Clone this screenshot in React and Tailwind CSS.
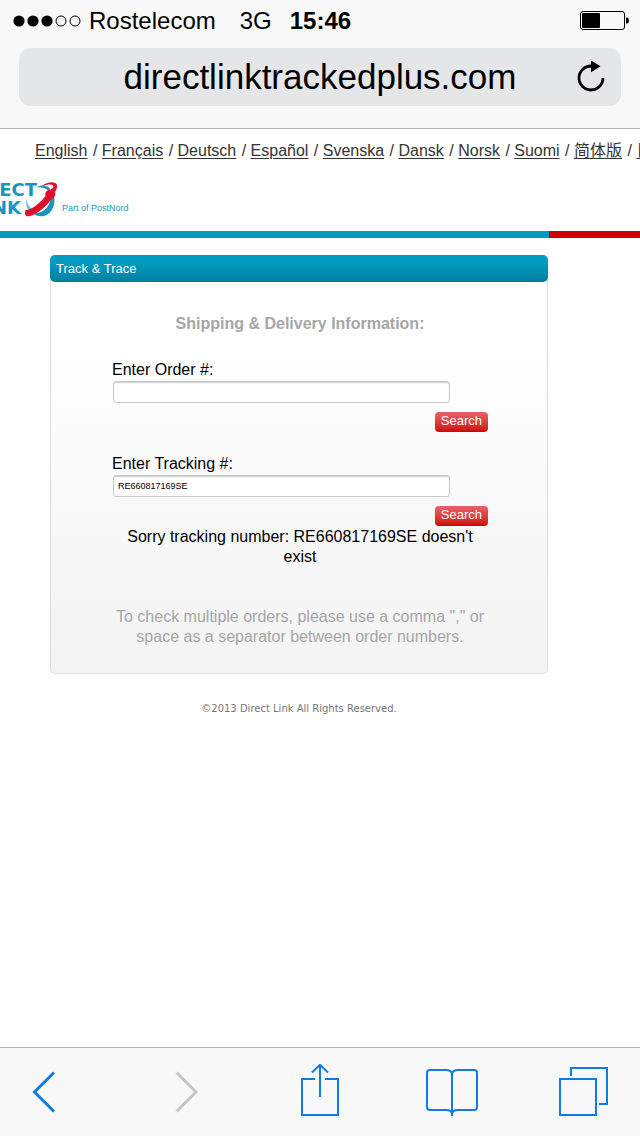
import { useState } from "react";

const languages = [
  "English",
  "Français",
  "Deutsch",
  "Español",
  "Svenska",
  "Dansk",
  "Norsk",
  "Suomi",
  "简体版",
  "日本語",
];

function SignalDots() {
  return (
    <svg width="68" height="12" viewBox="0 0 68 12" className="shrink-0">
      {[0, 1, 2, 3, 4].map((i) => (
        <circle
          key={i}
          cx={6 + i * 14}
          cy="6"
          r={i < 3 ? 5.6 : 5}
          fill={i < 3 ? "#000" : "none"}
          stroke={i < 3 ? "none" : "#000"}
        />
      ))}
    </svg>
  );
}

function Battery() {
  return (
    <svg width="49" height="19" viewBox="0 0 49 19">
      <rect x="0.5" y="0.5" width="44" height="18" rx="2.5" fill="none" stroke="#000" />
      <rect x="2" y="2" width="18" height="15" rx="1" fill="#000" />
      <path d="M46 6.5h1a1.8 1.8 0 0 1 1.8 1.8v2.4a1.8 1.8 0 0 1-1.8 1.8h-1z" fill="#000" />
    </svg>
  );
}

function BrowserHeader() {
  const [url, setUrl] = useState("directlinktrackedplus.com");
  return (
    <header className="border-b border-[#b2b2b2] bg-[#f8f8f8] pb-[22px]">
      <div className="flex h-12 items-center pl-[13px] pr-[11px] pb-[7px] text-2xl leading-7 text-black">
        <SignalDots />
        <span className="ml-2">Rostelecom</span>
        <span className="ml-6">3G</span>
        <span className="ml-[18px] font-bold">15:46</span>
        <span className="ml-auto">
          <Battery />
        </span>
      </div>
      <div className="mx-[19px] flex h-[58px] items-center rounded-xl bg-[#e5e6e8] px-4">
        <input
          type="text"
          aria-label="Address"
          value={url}
          onChange={(e) => setUrl(e.target.value)}
          className="ml-7 h-11 min-w-0 flex-1 bg-transparent text-center text-[35px] text-black outline-none"
        />
        <button aria-label="Reload">
          <svg width="28" height="32" viewBox="0 0 28 32">
            <path d="M26 17A12 12 0 1 1 14.5 5" fill="none" stroke="#000" strokeWidth="2.8" />
            <path d="M14 -0.5L23.500 5.200L14 11.200z" fill="#000" />
          </svg>
        </button>
      </div>
    </header>
  );
}

function LanguageNav() {
  return (
    <nav className="overflow-hidden whitespace-nowrap pl-[35px] pt-3 text-base leading-5 text-[#333]">
      {languages.map((lang, i) => (
        <span key={lang}>
          {i > 0 && " / "}
          <a href="#" className="mr-px underline underline-offset-2">
            {lang}
          </a>
        </span>
      ))}
    </nav>
  );
}

function Logo() {
  return (
    <div className="mt-5 flex h-[37px]">
      <div className="relative w-[58px] overflow-hidden font-['DejaVu_Sans'] text-lg leading-[18px] font-bold text-[#1b95bf]">
        <div className="flex w-[37px] justify-end">ECT</div>
        <div className="flex w-[21px] justify-end">NK</div>
        <svg width="34" height="36" viewBox="0 0 34 36" className="absolute left-6 top-0">
          <path d="M12 6.500C17 3.500 22 4 26 7L25 10C21 6.500 17 6 12 6.500z" fill="#1b95bf" />
          <path d="M2.500 18C1.500 25 3.500 29 7 31L10 29C6 27 3.800 24 2.500 18z" fill="#7cc0dc" />
          <path
            d="M29 12C33 20 29 33 20 35C15.500 36 11 34.500 8.500 32C14 33 19 31 22.500 27C26.500 22.500 27 17 26 13z"
            fill="#1b95bf"
          />
          <path
            d="M18 5C24 0 32 0.500 33 4C33.400 6 32.500 9 31 11C32 14 30.500 17 27.500 18C22 26 14 32.500 6 35C1.500 36 0 34 1.500 29C8 29 17 21 21.500 15C20.500 11.500 23 8.500 26.500 8.500C29 7 30 5.500 29 4.200C27 2.800 23 3.500 18 5z"
            fill="#df0f2b"
          />
        </svg>
      </div>
      <span className="ml-1 self-end pb-1 text-[9px] leading-3 text-[#1b95bf]">Part of PostNord</span>
    </div>
  );
}

function SearchField({ id, label, value, onChange }) {
  return (
    <div className="flex flex-col">
      <label htmlFor={id} className="text-base leading-5 text-black">
        {label}
      </label>
      <input
        id={id}
        type="text"
        value={value}
        onChange={(e) => onChange(e.target.value)}
        className="ml-px mr-[38px] mt-px h-[22px] rounded-[3px] border border-[#c8c8c8] bg-white px-1 text-[9px] text-black shadow-[inset_0_1px_1px_#ccc] outline-none"
      />
      <button
        type="submit"
        className="mt-[9px] h-5 self-end rounded bg-linear-to-b from-[#ea6067] to-[#cc0000] px-[6px] pb-[2px] text-[13px] leading-4 text-white"
      >
        Search
      </button>
    </div>
  );
}

function TrackCard() {
  const [order, setOrder] = useState("");
  const [tracking, setTracking] = useState("RE660817169SE");
  return (
    <section className="rounded-[5px] border border-t-0 border-[#ddd] bg-linear-to-b from-white from-15% to-[#f3f3f3]">
      <h2 className="-mx-px rounded-[5px] bg-linear-to-b from-[#009bc0] from-30% to-[#007f9f] px-[6px] text-[13px] leading-[27px] text-white">
        Track &amp; Trace
      </h2>
      <form
        onSubmit={(e) => e.preventDefault()}
        className="flex flex-col px-[59px] pb-[26px] pt-8 pl-[61px] text-base leading-5"
      >
        <h3 className="text-center font-bold text-[#a6a6a6]">Shipping &amp; Delivery Information:</h3>
        <div className="mt-[26px] flex flex-col gap-[22px]">
          <SearchField id="order" label="Enter Order #:" value={order} onChange={setOrder} />
          <SearchField id="tracking" label="Enter Tracking #:" value={tracking} onChange={setTracking} />
        </div>
        <p className="mt-px text-center text-black">Sorry tracking number: RE660817169SE doesn't exist</p>
        <p className="mt-10 text-center text-[#a6a6a6]">
          To check multiple orders, please use a comma "," or space as a separator between order numbers.
        </p>
      </form>
    </section>
  );
}

function Toolbar() {
  return (
    <footer className="flex h-[89px] items-center justify-between border-t border-[#b2b2b2] bg-[#f8f8f8] pl-8 pr-[31px] text-[#0f7be8]">
      <button aria-label="Back" className="pr-[38px]">
        <svg width="24" height="56" viewBox="0 0 24 56" fill="none" stroke="currentColor" strokeWidth="3">
          <path d="M22 8.500L2.500 28L22 47.500" />
        </svg>
      </button>
      <button aria-label="Forward" className="pr-[22px] text-[#c5c5c5]" disabled>
        <svg width="24" height="56" viewBox="0 0 24 56" fill="none" stroke="currentColor" strokeWidth="3">
          <path d="M2.500 8.500L22 28L2.500 47.500" />
        </svg>
      </button>
      <button aria-label="Share" className="pr-[5px]">
        <svg width="40" height="56" viewBox="0 0 40 56" fill="none" stroke="currentColor" strokeWidth="2">
          <path d="M15 15H2V51H38V15H25" />
          <path d="M20 1V33" />
          <path d="M12 8.500L20 0.800L28 8.500" />
        </svg>
      </button>
      <button aria-label="Bookmarks">
        <svg width="54" height="56" viewBox="0 0 54 56" fill="none" stroke="currentColor" strokeWidth="2">
          <path d="M27 9.500C26 7 24 6 21.500 6H5Q2 6 2 9V43Q2 46 5 46H21.500C24.500 46 26 47 27 49.500C28 47 29.500 46 32.500 46H49Q52 46 52 43V9Q52 6 49 6H32.500C30 6 28 7 27 9.500z" />
          <path d="M27 9V52" />
        </svg>
      </button>
      <button aria-label="Tabs">
        <svg width="50" height="56" viewBox="0 0 50 56" fill="none" stroke="currentColor" strokeWidth="2">
          <rect x="1" y="15" width="36" height="36" />
          <path d="M12 12V4H48V40H40" />
        </svg>
      </button>
    </footer>
  );
}

export default function App() {
  return (
    <div className="flex min-h-screen flex-col bg-white font-['Liberation_Sans','Noto_Sans_CJK_SC',sans-serif]">
      <BrowserHeader />
      <main className="flex-1 overflow-hidden">
        <LanguageNav />
        <Logo />
        <div className="mt-[13px] flex h-[7px]">
          <div className="flex-1 bg-[#0099bf]" />
          <div className="w-[91px] bg-[#cc0000]" />
        </div>
        <div className="mt-[17px] pl-[50px] pr-[92px]">
          <TrackCard />
          <p className="mt-[27px] text-center font-['DejaVu_Sans'] text-[10px] leading-4 text-[#777]">
            ©2013 Direct Link All Rights Reserved.
          </p>
        </div>
      </main>
      <Toolbar />
    </div>
  );
}
